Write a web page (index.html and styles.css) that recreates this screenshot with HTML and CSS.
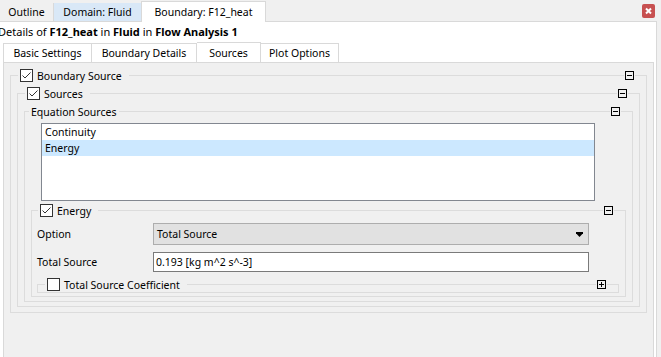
FILE: index.html
```html
<!DOCTYPE html>
<html lang="en">
    <head>
        <meta charset="UTF-8">
        <title>Boundary: F12_heat</title>
        <link rel="stylesheet" href="styles.css">
    </head>
    <body>
        <div class="topbar">
            <div class="ttab outline">Outline</div>
            <div class="ttab hover">Domain: Fluid</div>
            <div class="ttab active">Boundary: F12_heat</div>
            <div class="ttab-fill">
                <span class="close"><svg width="13" height="14" viewBox="0 0 13 14"><path d="M4 4.5 9 9.5M9 4.5 4 9.5" stroke="#fff" stroke-width="2"/></svg></span>
            </div>
        </div>

        <div class="main">
            <div class="crumb">Details of <b>F12_heat</b> in <b>Fluid</b> in <b>Flow Analysis 1</b></div>

            <div class="itabs">
                <div class="itab basic">Basic Settings</div>
                <div class="itab details">Boundary Details</div>
                <div class="itab sources">Sources</div>
                <div class="itab plot">Plot Options</div>
            </div>

            <div class="panel">
                <div class="grp g1">
                    <div class="head">
                        <span class="cap"><span class="chk"><svg width="11" height="11" viewBox="0 0 11 11"><path d="M1.5 5.5 4 8 9.5 2.5" fill="none" stroke="#333"/></svg></span>Boundary Source</span>
                        <span class="tog"><svg width="9" height="9" viewBox="0 0 9 9"><rect x="0.5" y="0.5" width="8" height="8" fill="none" stroke="#000"/><path d="M2 4.5H7" stroke="#000"/></svg></span>
                    </div>

                    <div class="grp g2">
                        <div class="head">
                            <span class="cap"><span class="chk"><svg width="11" height="11" viewBox="0 0 11 11"><path d="M1.5 5.5 4 8 9.5 2.5" fill="none" stroke="#333"/></svg></span>Sources</span>
                            <span class="tog"><svg width="9" height="9" viewBox="0 0 9 9"><rect x="0.5" y="0.5" width="8" height="8" fill="none" stroke="#000"/><path d="M2 4.5H7" stroke="#000"/></svg></span>
                        </div>

                        <div class="grp g3">
                            <div class="head">
                                <span class="cap plain">Equation Sources</span>
                                <span class="tog"><svg width="9" height="9" viewBox="0 0 9 9"><rect x="0.5" y="0.5" width="8" height="8" fill="none" stroke="#000"/><path d="M2 4.5H7" stroke="#000"/></svg></span>
                            </div>

                            <div class="list">
                                <div>Continuity</div>
                                <div class="sel">Energy</div>
                            </div>

                            <div class="grp energy">
                                <div class="head">
                                    <span class="cap"><span class="chk"><svg width="11" height="11" viewBox="0 0 11 11"><path d="M1.5 5.5 4 8 9.5 2.5" fill="none" stroke="#333"/></svg></span>Energy</span>
                                    <span class="tog"><svg width="9" height="9" viewBox="0 0 9 9"><rect x="0.5" y="0.5" width="8" height="8" fill="none" stroke="#000"/><path d="M2 4.5H7" stroke="#000"/></svg></span>
                                </div>

                                <div class="row first">
                                    <span class="lbl">Option</span>
                                    <div class="combo">
                                        <span>Total Source</span>
                                        <svg width="7" height="5" viewBox="0 0 7 5"><path d="M0 0H7V1.2L3.5 5 0 1.2Z" fill="#000"/></svg>
                                    </div>
                                </div>

                                <div class="row">
                                    <span class="lbl">Total Source</span>
                                    <div class="field">0.193 [kg m^2 s^-3]</div>
                                </div>

                                <div class="grp coef">
                                    <div class="head">
                                        <span class="cap"><span class="chk"></span>Total Source Coefficient</span>
                                        <span class="tog"><svg width="9" height="9" viewBox="0 0 9 9"><rect x="0.5" y="0.5" width="8" height="8" fill="none" stroke="#000"/><path d="M2 4.5H7M4.5 2V7" stroke="#000"/></svg></span>
                                    </div>
                                </div>
                            </div>
                        </div>
                    </div>
                </div>
            </div>
        </div>
    </body>
</html>
```

FILE: styles.css
```css
body {
    margin: 0;
    background-color: #f0f0f0;
    font-family: "Noto Sans", sans-serif;
    font-size: 10.5px;
    color: #000;
    overflow: hidden;
}

/* top document tabs */
.topbar {
    display: flex;
    align-items: flex-end;
    height: 22px;
    padding-right: 4px;
}

.ttab {
    box-sizing: border-box;
    height: 19px;
    border-bottom: 1px solid #d9d9d9;
    display: flex;
    align-items: center;
    justify-content: center;
}

.ttab.outline {
    width: 54px;
    border-right: 1px solid #d9d9d9;
}

.ttab.hover {
    width: 87px;
    background-color: #d9e8f7;
}

.ttab.active {
    width: 125px;
    height: 21px;
    background-color: #fff;
    border: 1px solid #d9d9d9;
    border-bottom: none;
}

.ttab-fill {
    flex: 1;
    align-self: stretch;
    box-sizing: border-box;
    border-bottom: 1px solid #d9d9d9;
    display: flex;
    justify-content: flex-end;
    align-items: flex-start;
    padding: 4px 2px 0 0;
}

.close {
    display: block;
    width: 13px;
    height: 14px;
    background-color: #c75050;
    border-radius: 2px;
}

.close svg {
    display: block;
}

/* white details area */
.main {
    background-color: #fff;
    border-right: 1px solid #d9d9d9;
    margin-right: 4px;
    height: 335px;
}

.crumb {
    height: 20px;
    line-height: 19px;
    font-size: 11px;
    margin-left: -2px;
    white-space: nowrap;
}

.itabs {
    display: flex;
    align-items: flex-end;
    height: 20px;
    padding-left: 3px;
}

.itab {
    box-sizing: border-box;
    height: 19px;
    border-top: 1px solid #d9d9d9;
    border-right: 1px solid #d9d9d9;
    display: flex;
    align-items: center;
    justify-content: center;
}

.itab.basic {
    width: 89px;
    border-left: 1px solid #d9d9d9;
}

.itab.details {
    width: 105px;
}

.itab.sources {
    width: 64px;
    height: 20px;
    background-color: #fff;
}

.itab.plot {
    width: 78px;
}

.panel {
    margin: 0 2px 0 3px;
    border: 1px solid #d9d9d9;
    background-color: #f0f0f0;
    height: 300px;
    padding-top: 12px;
    box-sizing: border-box;
}

/* collapsible group boxes */
.grp {
    border: 1px solid #dcdcdc;
    padding: 0 6px 4px 6px;
}

.g1 {
    margin: 0 6px;
    padding-bottom: 5px;
}

.energy {
    margin-top: 9px;
    padding-left: 5px;
    padding-bottom: 3px;
}

.coef {
    margin-top: 12px;
    padding-bottom: 0;
}

.head {
    display: flex;
    justify-content: space-between;
    align-items: center;
    height: 15px;
    margin: -8px 0 10px 0;
    padding: 0 6px 0 1px;
}

.g3 > .head {
    margin-bottom: 4px;
}

.energy > .head {
    margin-bottom: 5px;
}

.coef > .head {
    margin-bottom: 0;
}

.cap {
    display: flex;
    align-items: center;
    gap: 4px;
    height: 15px;
    padding: 0 7px 0 2px;
    background-color: #f0f0f0;
    white-space: nowrap;
}

.cap.plain {
    margin-left: -3px;
    padding: 0 3px 0 2px;
}

.chk {
    box-sizing: border-box;
    width: 13px;
    height: 13px;
    border: 1px solid #333;
    background-color: #fff;
}

.chk svg {
    display: block;
}

.tog {
    display: block;
    width: 9px;
    height: 9px;
    background-color: #f0f0f0;
    box-shadow: 0 0 0 1px #f0f0f0;
}

.tog svg {
    display: block;
}

/* list of equations */
.list {
    box-sizing: border-box;
    height: 78px;
    margin: 0 31px 0 10px;
    border: 1px solid #828790;
    background-color: #fff;
}

.list div {
    height: 16px;
    line-height: 16px;
    padding-left: 3px;
}

.list .sel {
    background-color: #cce8ff;
}

/* option rows */
.row {
    display: flex;
    align-items: center;
    margin-top: 7px;
}

.row.first {
    margin-top: 0;
}

.lbl {
    width: 116px;
}

.combo {
    box-sizing: border-box;
    width: 436px;
    height: 22px;
    border: 1px solid #adadad;
    background-color: #e1e1e1;
    display: flex;
    align-items: center;
    justify-content: space-between;
    padding: 0 5px 0 3px;
}

.field {
    box-sizing: border-box;
    width: 436px;
    height: 20px;
    line-height: 18px;
    border: 1px solid #7a7a7a;
    background-color: #fff;
    padding-left: 2px;
}
```
